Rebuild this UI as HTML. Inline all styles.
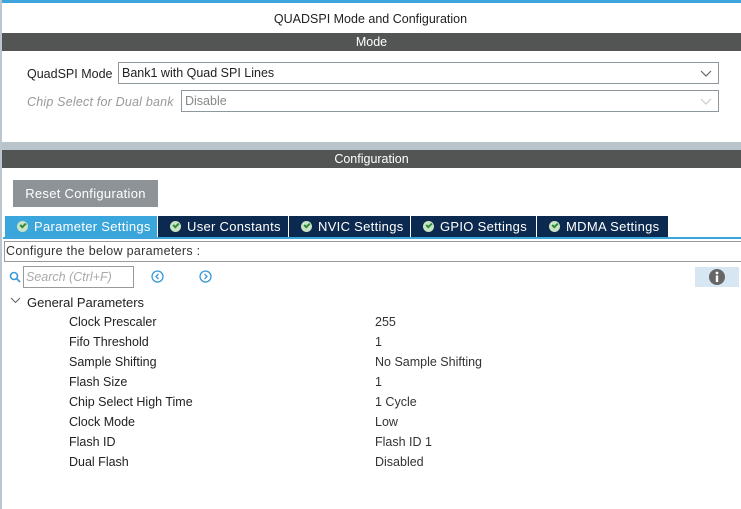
<!DOCTYPE html>
<html><head><style>
*{margin:0;padding:0;box-sizing:border-box}
body{width:741px;height:509px;background:#fff;font-family:"Liberation Sans",sans-serif;font-size:12.5px;color:#222;position:relative;overflow:hidden;white-space:nowrap}
.a{position:absolute}
.bar{position:absolute;left:2px;right:0;background:#535554;color:#fff;text-align:center;height:18px;line-height:19px;font-size:12.5px}
.dd{position:absolute;border:1px solid #8e979c;height:22px;line-height:21px;padding-left:3px}
.tab{position:absolute;top:216px;height:21px;line-height:21px;background:#0c2a4f;color:#fff;font-size:13px;padding-left:12px;letter-spacing:.3px}
.tab i{display:inline-block;width:11px;height:11px;border-radius:50%;background:#c9e3c5;vertical-align:-1px;margin-right:6px;position:relative}
.tab i:after{content:"";position:absolute;left:3px;top:2px;width:4px;height:2px;border-left:2px solid #2e8b3a;border-bottom:2px solid #2e8b3a;transform:rotate(-45deg)}
.row{position:absolute;left:69px;font-size:12.5px;color:#222}
.val{position:absolute;left:375px;color:#333}
</style></head><body>
<div class="a" style="left:0;top:0;width:741px;height:3px;background:#3ea6dc"></div>
<div class="a" style="left:0;top:0;width:2px;height:509px;background:#bcc6cc"></div>
<div class="a" style="left:0;top:12px;width:741px;text-align:center">QUADSPI Mode and Configuration</div>
<div class="bar" style="top:33px">Mode</div>
<div class="a" style="left:27px;top:67px">QuadSPI Mode</div>
<div class="dd" style="left:118px;top:62px;width:601px">Bank1 with Quad SPI Lines
<svg class="a" style="right:6px;top:7px" width="12" height="7"><path d="M1 1L6 6L11 1" stroke="#666" fill="none" stroke-width="1.2"/></svg></div>
<div class="a" style="left:27px;top:95px;color:#999;font-style:italic;letter-spacing:.2px">Chip Select for Dual bank</div>
<div class="dd" style="left:181px;top:90px;width:538px;color:#888">Disable
<svg class="a" style="right:6px;top:7px" width="12" height="7"><path d="M1 1L6 6L11 1" stroke="#ccc" fill="none" stroke-width="1.2"/></svg></div>
<div class="a" style="left:2px;top:142px;width:739px;height:8px;background:#b9c4ca"></div>
<div class="bar" style="top:150px">Configuration</div>
<div class="a" style="left:13px;top:180px;width:145px;height:27px;background:#8e9398;color:#fff;text-align:center;line-height:27px;font-size:13px;letter-spacing:.3px">Reset Configuration</div>
<div class="tab" style="left:5px;width:152px;background:#3aa6dc"><i></i>Parameter Settings</div>
<div class="tab" style="left:158px;width:130px"><i></i>User Constants</div>
<div class="tab" style="left:289px;width:121px"><i></i>NVIC Settings</div>
<div class="tab" style="left:411px;width:125px"><i></i>GPIO Settings</div>
<div class="tab" style="left:537px;width:131px"><i></i>MDMA Settings</div>
<div class="a" style="left:3px;top:237px;width:738px;height:2px;background:#3aa6dc"></div>
<div class="a" style="left:4px;top:241px;width:740px;height:21px;border:1px solid #999;line-height:19px;padding-left:1px;color:#333;letter-spacing:.3px">Configure the below parameters :</div>
<svg class="a" style="left:9px;top:271px" width="12" height="12"><circle cx="5" cy="5" r="3.5" stroke="#3a9ad9" stroke-width="1.6" fill="none"/><path d="M7.5 7.5L11 11" stroke="#3a9ad9" stroke-width="1.8"/></svg>
<div class="a" style="left:23px;top:266px;width:111px;height:22px;border:1px solid #999;color:#aaa;font-style:italic;line-height:21px;padding-left:2px">Search (Ctrl+F)</div>
<svg class="a" style="left:151px;top:270px" width="13" height="13"><circle cx="6.5" cy="6.5" r="5.5" stroke="#3a9ad9" stroke-width="1.3" fill="none"/><path d="M7.5 4L5 6.5L7.5 9" stroke="#3a9ad9" stroke-width="1.3" fill="none"/></svg>
<svg class="a" style="left:199px;top:270px" width="13" height="13"><circle cx="6.5" cy="6.5" r="5.5" stroke="#3a9ad9" stroke-width="1.3" fill="none"/><path d="M5.5 4L8 6.5L5.5 9" stroke="#3a9ad9" stroke-width="1.3" fill="none"/></svg>
<div class="a" style="left:695px;top:267px;width:44px;height:20px;background:#d7e6f3"></div>
<svg class="a" style="left:708px;top:268px" width="18" height="18"><circle cx="9" cy="9" r="8" fill="#666"/><circle cx="9" cy="5" r="1.4" fill="#fff"/><rect x="7.8" y="7.5" width="2.4" height="6.5" fill="#fff"/></svg>
<svg class="a" style="left:10px;top:297px" width="11" height="7"><path d="M1 1L5.5 5.5L10 1" stroke="#666" fill="none" stroke-width="1.1"/></svg>
<div class="a" style="left:27px;top:295px;font-size:13px">General Parameters</div>
<div class="row" style="top:315px">Clock Prescaler<span class="val" style="left:306px">255</span></div>
<div class="row" style="top:335px">Fifo Threshold<span class="val" style="left:306px">1</span></div>
<div class="row" style="top:355px">Sample Shifting<span class="val" style="left:306px">No Sample Shifting</span></div>
<div class="row" style="top:375px">Flash Size<span class="val" style="left:306px">1</span></div>
<div class="row" style="top:395px">Chip Select High Time<span class="val" style="left:306px">1 Cycle</span></div>
<div class="row" style="top:415px">Clock Mode<span class="val" style="left:306px">Low</span></div>
<div class="row" style="top:435px">Flash ID<span class="val" style="left:306px">Flash ID 1</span></div>
<div class="row" style="top:455px">Dual Flash<span class="val" style="left:306px">Disabled</span></div>
</body></html>
